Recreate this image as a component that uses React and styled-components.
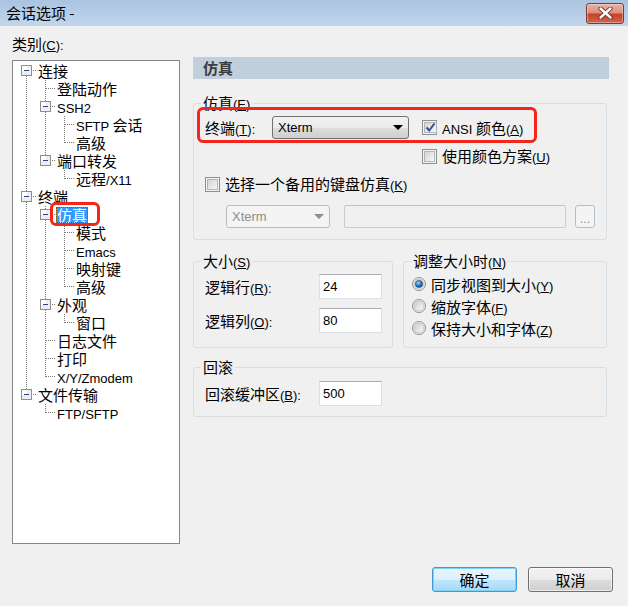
import React from "react";
import styled, { createGlobalStyle } from "styled-components";

const GlobalStyle = createGlobalStyle`
  html, body {
    margin: 0;
    padding: 0;
    background: #f0f0f0;
  }
  body {
    font-family: "Noto Sans CJK SC", "Liberation Sans", sans-serif;
    font-size: 15px;
    color: #000;
  }
  * {
    box-sizing: border-box;
  }
`;

const Window = styled.div`
  width: 628px;
  height: 606px;
  display: flex;
  flex-direction: column;
  background: #f0f0f0;
  overflow: hidden;
`;

const TitleBar = styled.div`
  height: 26px;
  flex: none;
  display: flex;
  align-items: center;
  justify-content: space-between;
  padding: 0 4px 0 6px;
  background: linear-gradient(#a9c3e0, #c2d7ed);
  line-height: 18px;
`;

const CloseButton = styled.div`
  width: 38px;
  height: 21px;
  border: 1px solid #7a3b33;
  border-radius: 3px;
  background: linear-gradient(#eab3a5 0%, #dc8f7d 45%, #c4432c 55%, #d2644c 100%);
  display: flex;
  align-items: center;
  justify-content: center;
  box-shadow: inset 0 0 0 1px rgba(255, 255, 255, 0.35);
`;

const Latin = styled.span`
  font-family: "Liberation Sans", Arial, sans-serif;
  font-size: 13px;
  line-height: 1;
`;

const Main = styled.div`
  display: flex;
  gap: 13px;
  padding: 9px 0 0 12px;
`;

const LeftCol = styled.div`
  width: 168px;
  display: flex;
  flex-direction: column;
  gap: 7px;
`;

const Caption = styled.div`
  height: 18px;
  line-height: 18px;
`;

const Tree = styled.div`
  height: 484px;
  border: 1px solid #828790;
  background: #fff;
  padding: 1px 0 0 4px;
`;

const TreeRow = styled.div`
  display: flex;
  align-items: center;
  height: 18px;
`;

const Gutter = styled.svg`
  flex: none;
  display: block;
`;

const TreeText = styled.span`
  position: relative;
  margin-left: 1px;
  padding: 0 1px;
  height: 16px;
  line-height: 16px;
  white-space: nowrap;
  background: ${(p) => (p.$selected ? "#3399ff" : "transparent")};
  color: ${(p) => (p.$selected ? "#fff" : "#000")};
  outline: ${(p) => (p.$selected ? "1px dotted #7a5a20" : "none")};
  outline-offset: -1px;
`;

const Annotation = styled.span`
  position: absolute;
  left: ${(p) => p.$x}px;
  top: ${(p) => p.$y}px;
  width: ${(p) => p.$w}px;
  height: ${(p) => p.$h}px;
  border: 3px solid #f4251b;
  border-radius: 6px;
  pointer-events: none;
`;

const RightCol = styled.div`
  width: 416px;
  padding-top: 22px;
`;

const Header = styled.div`
  height: 22px;
  line-height: 22px;
  padding-left: 10px;
  background: #c1cedb;
  color: #3c3c3c;
  font-weight: 700;
`;

const Group = styled.fieldset`
  margin: ${(p) => p.$mt || 0}px 0 0;
  width: ${(p) => p.$w}px;
  min-width: 0;
  border: 1px solid #d5dfe5;
  border-radius: 3px;
  padding: ${(p) => p.$pt}px 11px ${(p) => p.$pb}px;
`;

const Legend = styled.legend`
  margin-left: -4px;
  padding: 0 2px;
  height: 18px;
  line-height: 18px;
`;

const GroupRow = styled.div`
  display: flex;
  gap: 10px;
  margin-top: 12px;
`;

const Row = styled.div`
  position: relative;
  display: flex;
  align-items: center;
  height: ${(p) => p.$h}px;
  margin-top: ${(p) => p.$mt || 0}px;
  padding-left: ${(p) => p.$indent || 0}px;
  line-height: 18px;
`;

const FieldLabel = styled.span`
  width: ${(p) => p.$w}px;
  flex: none;
  white-space: nowrap;
`;

const Select = styled.div`
  width: ${(p) => p.$w}px;
  height: 23px;
  flex: none;
  display: flex;
  align-items: center;
  justify-content: space-between;
  padding: 0 5px 0 5px;
  border: 1px solid ${(p) => (p.$disabled ? "#b9bdc1" : "#707070")};
  border-radius: 3px;
  background: ${(p) =>
    p.$disabled
      ? "#f4f4f4"
      : "linear-gradient(#f2f2f2 0%, #ebebeb 50%, #dddddd 51%, #cfcfcf 100%)"};
  color: ${(p) => (p.$disabled ? "#8d8d8d" : "#000")};
  font-family: "Liberation Sans", Arial, sans-serif;
  font-size: 13px;
`;

const Arrow = styled.span`
  width: 0;
  height: 0;
  border-left: 5px solid transparent;
  border-right: 5px solid transparent;
  border-top: 5px solid ${(p) => (p.$disabled ? "#8d8d8d" : "#000")};
`;

const TextBox = styled.div`
  width: ${(p) => p.$w}px;
  height: ${(p) => p.$h || 25}px;
  flex: none;
  margin-left: ${(p) => p.$ml || 0}px;
  display: flex;
  align-items: center;
  padding-left: 3px;
  border: 1px solid ${(p) => (p.$disabled ? "#c9ccd0" : "#dbdfe6")};
  border-top-color: ${(p) => (p.$disabled ? "#c0c3c7" : "#abadb3")};
  border-radius: ${(p) => (p.$disabled ? "2px" : "0")};
  background: ${(p) => (p.$disabled ? "#f0f0f0" : "#fff")};
  font-family: "Liberation Sans", Arial, sans-serif;
  font-size: 13px;
`;

const SmallButton = styled.div`
  width: 20px;
  height: 23px;
  flex: none;
  margin-left: 9px;
  border: 1px solid #b9bdc1;
  border-radius: 3px;
  background: #f4f4f4;
  color: #8d8d8d;
  font-family: "Liberation Sans", Arial, sans-serif;
  font-size: 12px;
  display: flex;
  align-items: flex-end;
  justify-content: center;
  padding-bottom: 3px;
  line-height: 10px;
`;

const Check = styled.label`
  display: flex;
  align-items: center;
  gap: 5px;
  margin-left: ${(p) => p.$ml || 0}px;
  white-space: nowrap;
`;

const CheckBox = styled.span`
  width: 15px;
  height: 15px;
  flex: none;
  border: 1px solid #8e8f8f;
  padding: 1px;
  background: #f4f4f4;
  display: flex;

  & > span {
    flex: 1;
    display: flex;
    align-items: center;
    justify-content: center;
    border: 1px solid #b2b6bb;
    background: linear-gradient(135deg, #d2d5da, #f7f7f7);
  }
`;

const RadioList = styled.div`
  margin-left: -3px;
  display: flex;
  flex-direction: column;
`;

const Radio = styled.label`
  display: flex;
  align-items: center;
  gap: 5px;
  height: 22px;
  white-space: nowrap;
`;

const Footer = styled.div`
  display: flex;
  justify-content: flex-end;
  gap: 11px;
  padding: 23px 15px 0 0;
`;

const Button = styled.div`
  width: 85px;
  height: 25px;
  display: flex;
  align-items: center;
  justify-content: center;
  border-radius: 3px;
  border: 1px solid ${(p) => (p.$primary ? "#3c9ad6" : "#707070")};
  background: ${(p) =>
    p.$primary
      ? "linear-gradient(#eaf6fd 0%, #d9f0fc 50%, #bee6fd 51%, #a7d9f5 100%)"
      : "linear-gradient(#f2f2f2 0%, #ebebeb 50%, #dddddd 51%, #cfcfcf 100%)"};
  box-shadow: ${(p) =>
    p.$primary ? "inset 0 0 0 1px #7fd3f7" : "inset 0 0 0 1px rgba(255,255,255,0.6)"};
  line-height: 18px;
`;

// text with "&" before the mnemonic letter; latin runs use a smaller face
function Txt({ text }) {
  const runs = text.match(/[\u2e80-\u9fff\uff00-\uffef]+|[^\u2e80-\u9fff\uff00-\uffef]+/g) || [];
  return runs.map((seg, k) => {
    if (/[\u2e80-\u9fff]/.test(seg)) return <React.Fragment key={k}>{seg}</React.Fragment>;
    const [a, b] = seg.split("&");
    return (
      <Latin key={k}>
        {b === undefined ? (
          a
        ) : (
          <>
            {a}
            <u>{b[0]}</u>
            {b.slice(1)}
          </>
        )}
      </Latin>
    );
  });
}

const tree = [
  {
    label: "连接",
    children: [
      { label: "登陆动作" },
      { label: "SSH2", children: [{ label: "SFTP 会话" }, { label: "高级" }] },
      { label: "端口转发", children: [{ label: "远程/X11" }] },
    ],
  },
  {
    label: "终端",
    children: [
      {
        label: "仿真",
        selected: true,
        children: [{ label: "模式" }, { label: "Emacs" }, { label: "映射键" }, { label: "高级" }],
      },
      { label: "外观", children: [{ label: "窗口" }] },
      { label: "日志文件" },
      { label: "打印" },
      { label: "X/Y/Zmodem" },
    ],
  },
  { label: "文件传输", children: [{ label: "FTP/SFTP" }] },
];

function flatten(nodes, level = 0, trail = [], out = []) {
  nodes.forEach((n, i) => {
    const hasNext = i < nodes.length - 1;
    out.push({ ...n, level, trail, hasNext, hasPrev: level > 0 || i > 0 });
    if (n.children) flatten(n.children, level + 1, [...trail, hasNext], out);
  });
  return out;
}

const DOT = "#7a7a7a";

// gutter column: dotted connectors, and the [-] box for nodes with children
function Joint({ through, up, down, right, box }) {
  return (
    <Gutter width="19" height="18" shapeRendering="crispEdges">
      {through && <line x1="9.5" y1="0" x2="9.5" y2="18" stroke={DOT} strokeDasharray="1 1" />}
      {up && <line x1="9.5" y1="0" x2="9.5" y2="9" stroke={DOT} strokeDasharray="1 1" />}
      {down && <line x1="9.5" y1="10" x2="9.5" y2="18" stroke={DOT} strokeDasharray="1 1" />}
      {right && <line x1="10" y1="8.5" x2="19" y2="8.5" stroke={DOT} strokeDasharray="1 1" />}
      {box && (
        <>
          <rect x="4.5" y="3.5" width="10" height="10" fill="#eeeeee" stroke="#8f8f8f" />
          <rect x="5" y="4" width="5" height="5" fill="#ffffff" />
          <rect x="7" y="8" width="5" height="1" fill="#24408e" />
        </>
      )}
    </Gutter>
  );
}

function CheckMark({ checked }) {
  return (
    <CheckBox>
      <span>
        {checked && (
          <svg width="11" height="11" viewBox="0 0 11 11">
            <path d="M1.5 5.5 L4.2 8.5 L9.5 1.5" fill="none" stroke="#3a4f8c" strokeWidth="2" />
          </svg>
        )}
      </span>
    </CheckBox>
  );
}

function RadioDot({ on }) {
  return (
    <svg width="14" height="14" viewBox="0 0 14 14" style={{ flex: "none" }}>
      <defs>
        <linearGradient id="rbg" x1="0" y1="0" x2="1" y2="1">
          <stop offset="0" stopColor="#c9ccd1" />
          <stop offset="1" stopColor="#fafafa" />
        </linearGradient>
        <radialGradient id="rdot" cx="0.4" cy="0.35" r="0.7">
          <stop offset="0" stopColor="#a8dcf8" />
          <stop offset="0.5" stopColor="#2c7fc8" />
          <stop offset="1" stopColor="#0c3c7a" />
        </radialGradient>
      </defs>
      <circle cx="7" cy="7" r="6.5" fill="#f4f4f4" stroke="#8e8f8f" />
      <circle cx="7" cy="7" r="5" fill="url(#rbg)" stroke="#b8bcc1" strokeWidth="0.8" />
      {on && <circle cx="7" cy="7" r="3.6" fill="url(#rdot)" stroke="#1d4f86" strokeWidth="0.6" />}
    </svg>
  );
}

export default function App() {
  const rows = flatten(tree);
  return (
    <>
      <GlobalStyle />
      <Window>
        <TitleBar>
          <span>会话选项 -</span>
          <CloseButton>
            <svg width="15" height="12" viewBox="0 0 15 12">
              <path d="M2.5 1.5 L12.5 10.5 M12.5 1.5 L2.5 10.5" stroke="#6a2a22" strokeWidth="4.2" strokeLinecap="round" />
              <path d="M2.5 1.5 L12.5 10.5 M12.5 1.5 L2.5 10.5" stroke="#ffffff" strokeWidth="2.4" strokeLinecap="round" />
            </svg>
          </CloseButton>
        </TitleBar>

        <Main>
          <LeftCol>
            <Caption>
              <Txt text="类别(&C):" />
            </Caption>
            <Tree>
              {rows.map((r, i) => (
                <TreeRow key={i}>
                  {r.trail.map((t, k) => (
                    <Joint key={k} through={t} />
                  ))}
                  <Joint up={r.hasPrev} down={r.hasNext} right box={!!r.children} />
                  <TreeText $selected={r.selected}>
                    <Txt text={r.label} />
                    {r.selected && <Annotation $x={-6} $y={-5} $w={50} $h={24} />}
                  </TreeText>
                </TreeRow>
              ))}
            </Tree>
          </LeftCol>

          <RightCol>
            <Header>仿真</Header>

            <Group $w={414} $mt={15} $pt={4} $pb={11}>
              <Legend>
                <Txt text="仿真(&E)" />
              </Legend>
              <Row $h={23}>
                <FieldLabel $w={67}>
                  <Txt text="终端(&T):" />
                </FieldLabel>
                <Select $w={137}>
                  Xterm
                  <Arrow />
                </Select>
                <Check $ml={13}>
                  <CheckMark checked />
                  <span>
                    <Txt text="ANSI 颜色(&A)" />
                  </span>
                </Check>
                <Annotation $x={-8} $y={-9} $w={340} $h={36} />
              </Row>
              <Row $h={18} $mt={8}>
                <Check $ml={217}>
                  <CheckMark />
                  <span>
                    <Txt text="使用颜色方案(&U)" />
                  </span>
                </Check>
              </Row>
              <Row $h={18} $mt={10}>
                <Check>
                  <CheckMark />
                  <span>
                    <Txt text="选择一个备用的键盘仿真(&K)" />
                  </span>
                </Check>
              </Row>
              <Row $h={23} $mt={12} $indent={21}>
                <Select $w={104} $disabled>
                  Xterm
                  <Arrow $disabled />
                </Select>
                <TextBox $w={222} $h={23} $ml={14} $disabled />
                <SmallButton>...</SmallButton>
              </Row>
            </Group>

            <GroupRow>
              <Group $w={200} $pt={4} $pb={13}>
                <Legend>
                  <Txt text="大小(&S)" />
                </Legend>
                <Row $h={25}>
                  <FieldLabel $w={114}>
                    <Txt text="逻辑行(&R):" />
                  </FieldLabel>
                  <TextBox $w={63}>24</TextBox>
                </Row>
                <Row $h={25} $mt={9}>
                  <FieldLabel $w={114}>
                    <Txt text="逻辑列(&O):" />
                  </FieldLabel>
                  <TextBox $w={63}>80</TextBox>
                </Row>
              </Group>

              <Group $w={204} $pt={3} $pb={8}>
                <Legend>
                  <Txt text="调整大小时(&N)" />
                </Legend>
                <RadioList>
                  <Radio>
                    <RadioDot on />
                    <span>
                      <Txt text="同步视图到大小(&Y)" />
                    </span>
                  </Radio>
                  <Radio>
                    <RadioDot />
                    <span>
                      <Txt text="缩放字体(&F)" />
                    </span>
                  </Radio>
                  <Radio>
                    <RadioDot />
                    <span>
                      <Txt text="保持大小和字体(&Z)" />
                    </span>
                  </Radio>
                </RadioList>
              </Group>
            </GroupRow>

            <Group $w={414} $mt={10} $pt={5} $pb={10}>
              <Legend>回滚</Legend>
              <Row $h={25}>
                <FieldLabel $w={114}>
                  <Txt text="回滚缓冲区(&B):" />
                </FieldLabel>
                <TextBox $w={63}>500</TextBox>
              </Row>
            </Group>
          </RightCol>
        </Main>

        <Footer>
          <Button $primary>确定</Button>
          <Button>取消</Button>
        </Footer>
      </Window>
    </>
  );
}
